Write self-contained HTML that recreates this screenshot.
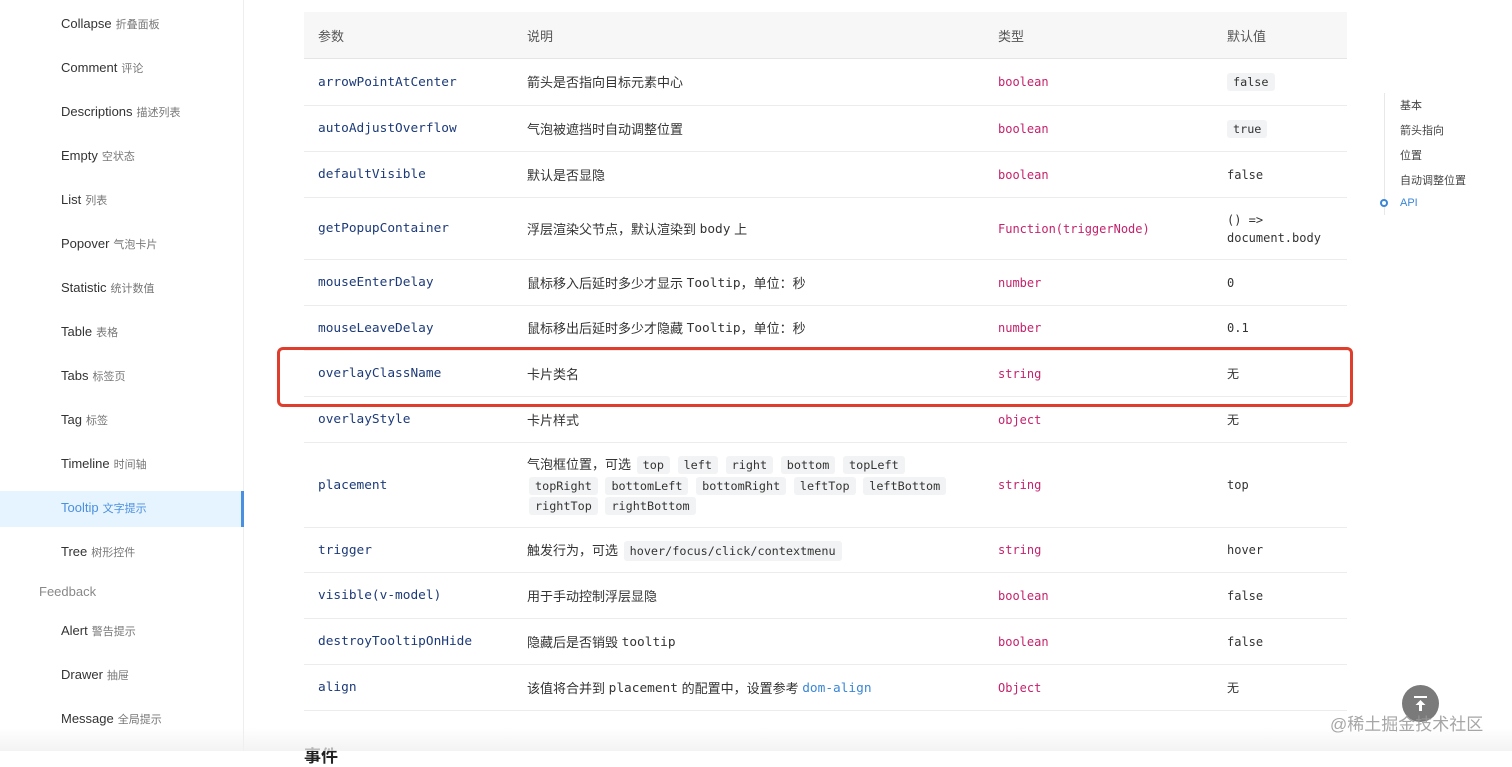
<!DOCTYPE html>
<html><head><meta charset="utf-8"><style>
*{margin:0;padding:0;box-sizing:border-box}
body{width:1512px;height:751px;overflow:hidden;background:#fff;font-family:"Liberation Sans","Noto Sans CJK SC",sans-serif;position:relative;color:#333}
.side{position:absolute;left:0;top:0;width:244px;height:751px;border-right:1px solid #eee}
.si{position:absolute;left:61px;font-size:13px;color:#333;white-space:nowrap}
.si small{font-size:11px;color:#777;margin-left:4px}
.act{position:absolute;left:0;top:491px;width:244px;height:36px;background:#e6f4ff;border-right:3px solid #4b8fe0}
.mono{font-family:"DejaVu Sans Mono",monospace;font-size:12.8px}
.row{position:absolute;left:304px;width:1043px;border-bottom:1px solid #ececec}
.c{position:absolute;top:0;height:100%;display:flex;align-items:center;font-size:13px;white-space:nowrap}
.p{left:14px;color:#1d3a78;font-family:"DejaVu Sans Mono",monospace;font-size:12.8px}
.d{left:223px;color:#333;line-height:16px;padding-top:2px}
.t{left:694px;color:#c4226b;font-family:"DejaVu Sans Mono",monospace;font-size:12px}
.v{left:923px;color:#333;font-family:"DejaVu Sans Mono",monospace;font-size:12px}
code{font-family:"DejaVu Sans Mono",monospace;font-size:11.8px;background:#f2f3f4;padding:2px 6px;border-radius:3px;margin:0 2px}
.toc{position:absolute;left:1400px;font-size:11px;color:#444}
</style></head><body>
<div class="side">
<div class="act"></div>
<div class="si" style="top:16px">Collapse<small>折叠面板</small></div>
<div class="si" style="top:60px">Comment<small>评论</small></div>
<div class="si" style="top:104px">Descriptions<small>描述列表</small></div>
<div class="si" style="top:148px">Empty<small>空状态</small></div>
<div class="si" style="top:192px">List<small>列表</small></div>
<div class="si" style="top:236px">Popover<small>气泡卡片</small></div>
<div class="si" style="top:280px">Statistic<small>统计数值</small></div>
<div class="si" style="top:324px">Table<small>表格</small></div>
<div class="si" style="top:368px">Tabs<small>标签页</small></div>
<div class="si" style="top:412px">Tag<small>标签</small></div>
<div class="si" style="top:456px">Timeline<small>时间轴</small></div>
<div class="si" style="top:500px;color:#4b8fe0">Tooltip<small style="color:#4b8fe0">文字提示</small></div>
<div class="si" style="top:544px">Tree<small>树形控件</small></div>
<div class="si" style="top:584px;left:39px;color:#888">Feedback</div>
<div class="si" style="top:623px">Alert<small>警告提示</small></div>
<div class="si" style="top:667px">Drawer<small>抽屉</small></div>
<div class="si" style="top:711px">Message<small>全局提示</small></div>
</div>

<div class="row" style="top:12px;height:47px;background:#f7f7f7;border-bottom:1px solid #e5e5e5">
<div class="c" style="left:14px;color:#555">参数</div><div class="c" style="left:223px;color:#555">说明</div><div class="c" style="left:694px;color:#555">类型</div><div class="c" style="left:923px;color:#555">默认值</div></div>

<div class="row" style="top:59px;height:47px"><div class="c p">arrowPointAtCenter</div><div class="c d">箭头是否指向目标元素中心</div><div class="c t">boolean</div><div class="c v"><code style="margin:0">false</code></div></div>
<div class="row" style="top:106px;height:46px"><div class="c p">autoAdjustOverflow</div><div class="c d">气泡被遮挡时自动调整位置</div><div class="c t">boolean</div><div class="c v"><code style="margin:0">true</code></div></div>
<div class="row" style="top:152px;height:46px"><div class="c p">defaultVisible</div><div class="c d">默认是否显隐</div><div class="c t">boolean</div><div class="c v">false</div></div>
<div class="row" style="top:198px;height:62px"><div class="c p">getPopupContainer</div><div class="c d">浮层渲染父节点，默认渲染到&nbsp;<span class="mono">body</span>&nbsp;上</div><div class="c t">Function(triggerNode)</div><div class="c v" style="line-height:18px">() =&gt;<br>document.body</div></div>
<div class="row" style="top:260px;height:46px"><div class="c p">mouseEnterDelay</div><div class="c d">鼠标移入后延时多少才显示&nbsp;<span class="mono">Tooltip</span>，单位：秒</div><div class="c t">number</div><div class="c v">0</div></div>
<div class="row" style="top:306px;height:45px"><div class="c p">mouseLeaveDelay</div><div class="c d">鼠标移出后延时多少才隐藏&nbsp;<span class="mono">Tooltip</span>，单位：秒</div><div class="c t">number</div><div class="c v">0.1</div></div>
<div class="row" style="top:351px;height:46px"><div class="c p">overlayClassName</div><div class="c d">卡片类名</div><div class="c t">string</div><div class="c v">无</div></div>
<div class="row" style="top:397px;height:46px"><div class="c p">overlayStyle</div><div class="c d">卡片样式</div><div class="c t">object</div><div class="c v">无</div></div>
<div class="row" style="top:443px;height:85px"><div class="c p">placement</div>
<div class="c d"><div style="line-height:19.5px;white-space:normal;width:445px">气泡框位置，可选 <code>top</code> <code>left</code> <code>right</code> <code>bottom</code> <code>topLeft</code> <code>topRight</code> <code>bottomLeft</code> <code>bottomRight</code> <code>leftTop</code> <code>leftBottom</code> <code>rightTop</code> <code>rightBottom</code></div></div>
<div class="c t">string</div><div class="c v">top</div></div>
<div class="row" style="top:528px;height:45px"><div class="c p">trigger</div><div class="c d">触发行为，可选&nbsp;<code>hover/focus/click/contextmenu</code></div><div class="c t">string</div><div class="c v">hover</div></div>
<div class="row" style="top:573px;height:46px"><div class="c p">visible(v-model)</div><div class="c d">用于手动控制浮层显隐</div><div class="c t">boolean</div><div class="c v">false</div></div>
<div class="row" style="top:619px;height:46px"><div class="c p">destroyTooltipOnHide</div><div class="c d">隐藏后是否销毁&nbsp;<span class="mono">tooltip</span></div><div class="c t">boolean</div><div class="c v">false</div></div>
<div class="row" style="top:665px;height:46px"><div class="c p">align</div><div class="c d">该值将合并到&nbsp;<span class="mono">placement</span>&nbsp;的配置中，设置参考&nbsp;<span class="mono" style="color:#3a86d8">dom-align</span></div><div class="c t">Object</div><div class="c v">无</div></div>

<div style="position:absolute;left:277px;top:347px;width:1076px;height:60px;border:3px solid #e03e2d;border-radius:6px"></div>

<div style="position:absolute;left:304px;top:742px;font-size:17px;font-weight:bold;color:#222">事件</div>
<div style="position:absolute;left:0;top:728px;width:1512px;height:23px;background:linear-gradient(rgba(255,255,255,0),rgba(240,240,240,.8))"></div>

<div style="position:absolute;left:1384px;top:93px;height:122px;width:1px;background:#e8e8e8"></div>
<div class="toc" style="top:97px">基本</div>
<div class="toc" style="top:122px">箭头指向</div>
<div class="toc" style="top:147px">位置</div>
<div class="toc" style="top:172px">自动调整位置</div>
<div class="toc" style="top:197px;color:#3a86d8">API</div>
<div style="position:absolute;left:1380px;top:199px;width:8px;height:8px;border:2px solid #3a86d8;border-radius:50%;background:#fff"></div>

<div style="position:absolute;left:1402px;top:685px;width:37px;height:37px;border-radius:50%;background:#7a7a7a"></div>
<svg style="position:absolute;left:1402px;top:685px" width="37" height="37"><path d="M12 12h13" stroke="#fff" stroke-width="2"/><path d="M18.5 15l-5 5h3.5v6h3v-6h3.5z" fill="#fff"/></svg>
<div style="position:absolute;left:1330px;top:710px;font-size:17px;color:rgba(150,150,150,.85)">@稀土掘金技术社区</div>
</body></html>
